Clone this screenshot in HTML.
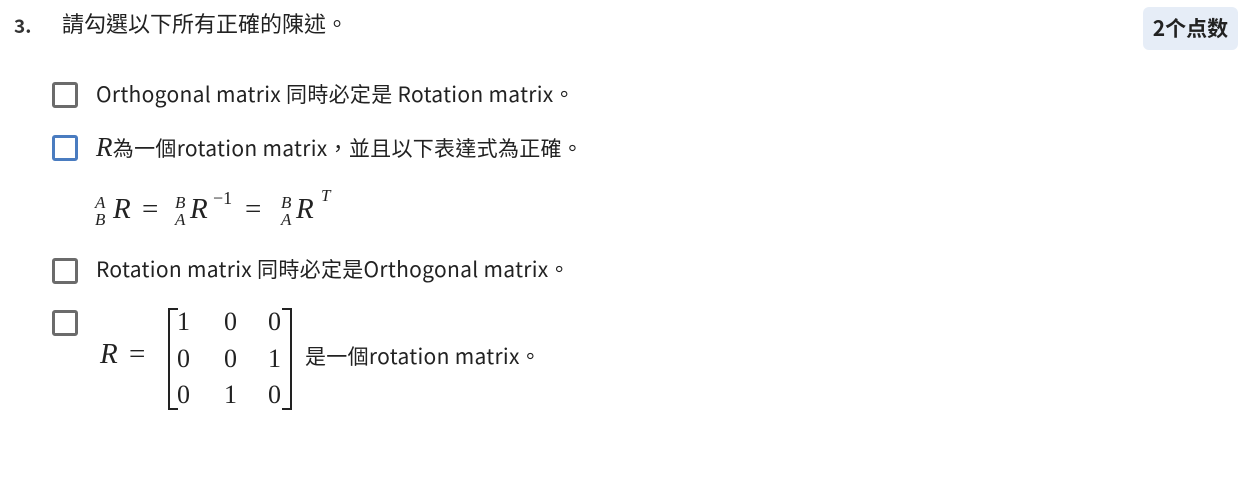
<!DOCTYPE html>
<html><head><meta charset="utf-8"><style>
body{margin:0;width:1251px;height:489px;background:#fff;position:relative;font-family:"Noto Sans CJK TC","Liberation Sans",sans-serif;color:#222;overflow:hidden}
.a{position:absolute;white-space:nowrap}
.t{font-size:21px;line-height:24px;letter-spacing:0.3px}
.cb{position:absolute;width:20px;height:20px;border:3px solid #6b6b6b;border-radius:3px;box-sizing:content-box}
.m{font-family:"Liberation Serif","DejaVu Serif",serif;font-size:29px}
.i{font-style:italic}
.s{font-family:"Liberation Serif",serif;font-style:italic;font-size:17px;position:absolute;line-height:16px}
</style></head><body>
<div class="a" style="left:14px;top:12px;font-size:19px;font-weight:bold;color:#333">3.</div>
<div class="a" style="left:62px;top:8px;font-size:22px;line-height:30px">請勾選以下所有正確的陳述。</div>
<div class="a" style="left:1143px;top:7px;width:95px;height:43px;background:#e6edf7;border-radius:6px;font-size:21px;font-weight:bold;line-height:43px;text-align:center;color:#222">2个点数</div>

<div class="cb" style="left:52px;top:82px"></div>
<div class="a t" style="left:96px;top:82px">Orthogonal matrix 同時必定是 Rotation matrix。</div>

<div class="cb" style="left:52px;top:135px;border-color:#4a7cc0"></div>
<div class="a t" style="left:96px;top:135px"><span class="i" style="font-family:'Liberation Serif',serif;font-size:27px">R</span>為一個rotation matrix，並且以下表達式為正確。</div>

<div class="a" style="left:95px;top:190px;width:260px;height:45px">
 <span class="s" style="left:0;top:5px">A</span><span class="s" style="left:0;top:22px">B</span>
 <span class="a m i" style="left:18px;top:3px">R</span>
 <span class="a m" style="left:47px;top:3px">=</span>
 <span class="s" style="left:80px;top:5px">B</span><span class="s" style="left:80px;top:22px">A</span>
 <span class="a m i" style="left:95px;top:3px">R</span>
 <span class="a" style="left:118px;top:-2px;font-family:'Liberation Serif',serif;font-size:18px">−1</span>
 <span class="a m" style="left:150px;top:3px">=</span>
 <span class="s" style="left:186px;top:5px">B</span><span class="s" style="left:186px;top:22px">A</span>
 <span class="a m i" style="left:201px;top:3px">R</span>
 <span class="s" style="left:226px;top:-2px">T</span>
</div>

<div class="cb" style="left:52px;top:258px"></div>
<div class="a t" style="left:96px;top:257px">Rotation matrix 同時必定是Orthogonal matrix。</div>

<div class="cb" style="left:52px;top:310px"></div>
<span class="a m i" style="left:100px;top:338px">R</span>
<span class="a m" style="left:129px;top:338px">=</span>
<div class="a" style="left:168px;top:308px;width:8px;height:98px;border:2px solid #222;border-right:none"></div>
<div class="a" style="left:282px;top:308px;width:8px;height:98px;border:2px solid #222;border-left:none"></div>
<div class="a m" style="left:177px;top:304px;line-height:36.5px;font-size:26px">
<div style="display:flex"><span style="width:47px">1</span><span style="width:44px">0</span><span>0</span></div>
<div style="display:flex"><span style="width:47px">0</span><span style="width:44px">0</span><span>1</span></div>
<div style="display:flex"><span style="width:47px">0</span><span style="width:44px">1</span><span>0</span></div>
</div>
<div class="a t" style="left:305px;top:344px">是一個rotation matrix。</div>
</body></html>
